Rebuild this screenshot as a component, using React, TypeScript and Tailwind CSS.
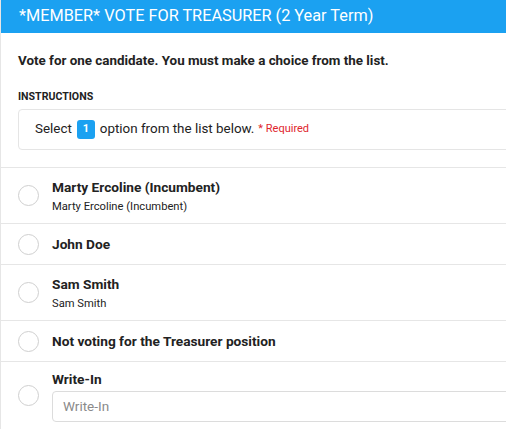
import React from "react";

type Option = { title: string; sub?: string };

const options: Option[] = [
  { title: "Marty Ercoline (Incumbent)", sub: "Marty Ercoline (Incumbent)" },
  { title: "John Doe" },
  { title: "Sam Smith", sub: "Sam Smith" },
  { title: "Not voting for the Treasurer position" },
];

function Radio() {
  return <span className="block h-[21px] w-[21px] shrink-0 rounded-full border border-[#cfcfcf] bg-white" />;
}

export default function App() {
  return (
    <div className="h-[429px] w-[506px] overflow-hidden bg-white text-[#222] font-['Roboto',sans-serif]">
      <div className="w-[560px] border-l border-[#e6e6e6]">
        <div className="flex h-[33px] items-center bg-[#1ba1f1] pl-[18px] text-[16.3px] text-white">
          *MEMBER* VOTE FOR TREASURER (2 Year Term)
        </div>

        <div className="px-[17px] pb-[17px] pt-[17px]">
          <p className="text-[13.4px] font-bold leading-[22px]">
            Vote for one candidate. You must make a choice from the list.
          </p>
          <p className="mt-[18px] text-[10.6px] font-bold leading-[14px]">INSTRUCTIONS</p>
          <div className="mt-[5px] flex h-[41px] items-center rounded border border-[#e5e5e5] pl-[16px] text-[13.4px]">
            Select
            <span className="mx-[5px] flex h-[19px] w-[18px] items-center justify-center rounded-[3px] bg-[#1ba1f1] text-[11px] font-bold text-white">
              1
            </span>
            option from the list below.
            <span className="ml-[4px] text-[11px] text-[#e0262d]">* Required</span>
          </div>
        </div>

        {options.map((o) => (
          <div
            key={o.title}
            className={`flex items-center gap-[13px] border-t border-[#e6e6e6] pl-[17px] ${o.sub ? "h-[56px]" : "h-[41px]"}`}
          >
            <Radio />
            <div>
              <div className="text-[13.7px] font-bold leading-[20px]">{o.title}</div>
              {o.sub && <div className="mt-[2px] text-[11.2px] leading-[16px]">{o.sub}</div>}
            </div>
          </div>
        ))}

        <div className="flex items-center gap-[13px] border-t border-[#e6e6e6] pb-[8px] pl-[17px] pt-[7px]">
          <Radio />
          <div className="flex-1">
            <div className="text-[13.7px] font-bold leading-[20px]">Write-In</div>
            <div className="mt-[2px] flex h-[31px] items-center rounded border border-[#dcdcdc] pl-[10px] text-[13.5px] text-[#8a8a8a]">
              Write-In
            </div>
          </div>
        </div>
      </div>
    </div>
  );
}
